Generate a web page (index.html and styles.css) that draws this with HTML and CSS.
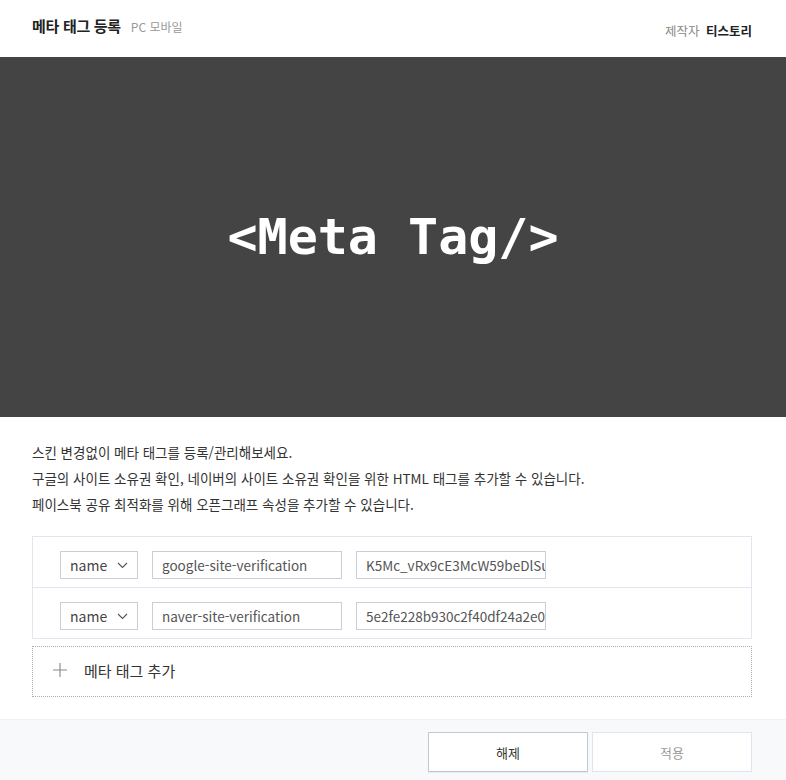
FILE: index.html
```html
<!DOCTYPE html>
<html lang="ko">
<head>
  <meta charset="UTF-8">
  <title>메타 태그 등록</title>
  <link rel="stylesheet" href="styles.css">
</head>
<body>
  <div class="header">
    <div class="title">
      <h1>메타 태그 등록</h1>
      <span class="platform">PC 모바일</span>
    </div>
    <div class="maker">
      <span class="maker-label">제작자</span>
      <span class="maker-name">티스토리</span>
    </div>
  </div>

  <div class="banner">&lt;Meta Tag/&gt;</div>

  <div class="content">
    <p class="desc">
      스킨 변경없이 메타 태그를 등록/관리해보세요.<br>
      구글의 사이트 소유권 확인, 네이버의 사이트 소유권 확인을 위한 HTML 태그를 추가할 수 있습니다.<br>
      페이스북 공유 최적화를 위해 오픈그래프 속성을 추가할 수 있습니다.
    </p>

    <div class="tag-list">
      <div class="tag-row">
        <div class="select">name
          <svg width="11" height="7" viewBox="0 0 11 7"><path d="M1 1l4.5 4.5L10 1" fill="none" stroke="#555" stroke-width="1.1"/></svg>
        </div>
        <div class="field"><span>google-site-verification</span></div>
        <div class="field"><span>K5Mc_vRx9cE3McW59beDlSu</span></div>
      </div>
      <div class="tag-row">
        <div class="select">name
          <svg width="11" height="7" viewBox="0 0 11 7"><path d="M1 1l4.5 4.5L10 1" fill="none" stroke="#555" stroke-width="1.1"/></svg>
        </div>
        <div class="field"><span>naver-site-verification</span></div>
        <div class="field"><span>5e2fe228b930c2f40df24a2e0</span></div>
      </div>
    </div>

    <div class="add-tag">
      <svg width="14" height="14" viewBox="0 0 14 14"><path d="M7 0v14M0 7h14" stroke="#888" stroke-width="1.1"/></svg>
      <span>메타 태그 추가</span>
    </div>
  </div>

  <div class="footer">
    <button class="btn btn-reset">해제</button>
    <button class="btn btn-apply">적용</button>
  </div>
</body>
</html>
```

FILE: styles.css
```css
body {
  margin: 0;
  font-family: "Noto Sans CJK KR", "Noto Sans", sans-serif;
  color: #333;
  background: #fff;
  width: 786px;
  height: 780px;
  overflow: hidden;
}
.header {
  height: 57px;
  display: flex;
  align-items: center;
  justify-content: space-between;
  padding: 0 34px 0 32px;
}
.title {
  display: flex;
  align-items: baseline;
  gap: 10px;
  margin-top: -6px;
}
h1 {
  margin: 0;
  font-size: 15px;
  font-weight: 700;
  color: #222;
  letter-spacing: -0.3px;
}
.platform {
  font-size: 12px;
  color: #999;
}
.maker {
  font-size: 12.5px;
  margin-top: 3px;
}
.maker-label {
  color: #888;
  margin-right: 3px;
}
.maker-name {
  color: #222;
  font-weight: 700;
}
.banner {
  height: 360px;
  background-color: #444;
  color: #fff;
  display: flex;
  align-items: center;
  justify-content: center;
  font-family: "DejaVu Sans Mono", monospace;
  font-weight: 700;
  font-size: 50px;
}
.content {
  padding: 22px 34px 22px 32px;
}
.desc {
  margin: 0 0 19px;
  font-size: 13.5px;
  line-height: 26px;
  color: #333;
}
.tag-list {
  border: 1px solid #e3e5ee;
}
.tag-row {
  height: 50px;
  box-sizing: border-box;
  display: flex;
  align-items: flex-start;
  gap: 14px;
  padding: 14px 0 0 27px;
}
.tag-row + .tag-row {
  height: 51px;
  border-top: 1px solid #e3e5ee;
}
.select, .field {
  height: 28px;
  box-sizing: border-box;
  border: 1px solid #c9ced8;
  font-size: 14px;
  display: flex;
  align-items: center;
  white-space: nowrap;
  overflow: hidden;
}
.select {
  width: 78px;
  padding: 0 9px;
  justify-content: space-between;
  color: #444;
}
.field {
  width: 190px;
  padding-left: 9px;
  font-size: 13.5px;
  color: #555;
}
.add-tag {
  margin-top: 7px;
  height: 51px;
  box-sizing: border-box;
  border: 1px dotted #a9acb5;
  display: flex;
  align-items: center;
  gap: 17px;
  padding: 0 0 3px 20px;
  font-size: 15px;
  color: #333;
}
.footer {
  height: 62px;
  background: #f8f9fb;
  border-top: 1px solid #eff1f5;
  box-sizing: border-box;
  display: flex;
  justify-content: flex-end;
  align-items: flex-start;
  gap: 4px;
  padding: 12px 34px 0 0;
}
.btn {
  width: 160px;
  height: 40px;
  background: #fff;
  font-family: inherit;
  font-size: 13px;
  cursor: pointer;
}
.btn-reset {
  border: 1px solid #c3c9d4;
  color: #333;
  box-shadow: 0 1px 1px rgba(0, 0, 0, 0.06);
}
.btn-apply {
  border: 1px solid #e1e4ec;
  color: #999;
}
```
